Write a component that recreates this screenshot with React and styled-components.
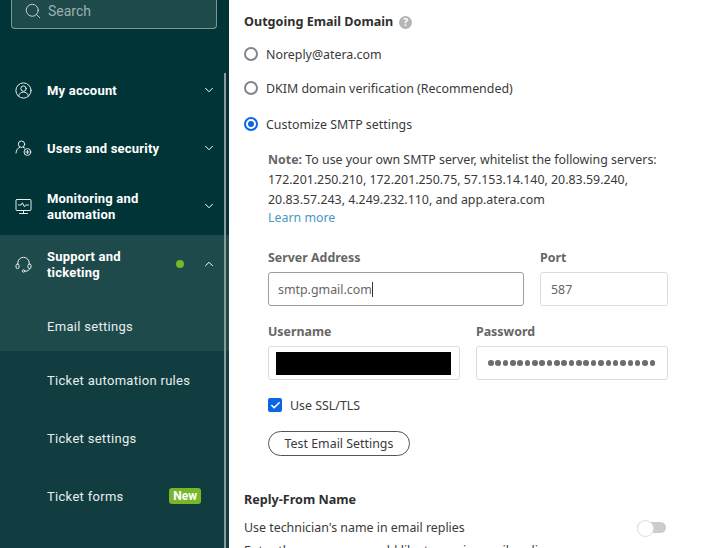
import React from 'react'
import styled, { createGlobalStyle } from 'styled-components'
import { Search, ChevronDown, ChevronUp, Check } from 'lucide-react'

const Global = createGlobalStyle`
  html, body {
    margin: 0;
    height: 100%;
    overflow: hidden;
    background: #fff;
  }
  * { box-sizing: border-box; }
`

const Page = styled.div`
  display: flex;
  width: 706px;
  height: 548px;
  overflow: hidden;
`

const Sidebar = styled.aside`
  position: relative;
  flex: 0 0 229px;
  height: 548px;
  background: #003437;
  font-family: Roboto, sans-serif;
  color: #fff;
  overflow: hidden;
`

const Scrollbar = styled.div`
  position: absolute;
  top: 73px;
  bottom: 0;
  right: 3px;
  width: 2px;
  background: #8a9a9b;
`

const SearchBox = styled.div`
  display: flex;
  align-items: center;
  gap: 6px;
  width: 206px;
  height: 29px;
  margin: 0 0 32px 11px;
  padding: 0 0 6px 12px;
  background: #1f4a4b;
  border: 1px solid #7f9696;
  border-top: 0;
  border-radius: 0 0 4px 4px;
  color: #9bb0b0;
  font-size: 14px;
`

const NavItem = styled.div`
  display: flex;
  align-items: center;
  height: 58px;
  padding-left: 15px;
  background: ${p => (p.$open ? '#1f4a4b' : 'transparent')};
  font-size: 13px;
  font-weight: 700;
  line-height: 16px;
  letter-spacing: 0.2px;
`

const NavIcon = styled.svg`
  flex: 0 0 17px;
  width: 17px;
  height: 17px;
  margin-right: 15px;
  fill: none;
  stroke: #e6eded;
  stroke-width: 1;
  stroke-linecap: round;
  stroke-linejoin: round;
`

const NavLabel = styled.span`
  flex: 1;
  padding-top: 2px;
`

const Dot = styled.span`
  width: 8px;
  height: 8px;
  margin-right: 18px;
  border-radius: 50%;
  background: #76b82a;
`

const Chevron = styled.span`
  display: flex;
  margin-right: 13px;
`

const SubMenu = styled.div`
  height: 255px;
  background: #113d40;
`

const SubItem = styled.div`
  display: flex;
  align-items: center;
  justify-content: space-between;
  height: 58px;
  padding: ${p => (p.$active ? '8px' : '0')} 28px 0 47px;
  background: ${p => (p.$active ? '#1f4a4b' : 'transparent')};
  font-size: 13px;
  letter-spacing: 0.3px;
  color: #e8eeee;
`

const NewBadge = styled.span`
  padding: 1px 4px;
  border-radius: 3px;
  background: #76b82a;
  color: #fff;
  font-size: 12px;
  font-weight: 700;
  line-height: 14px;
  letter-spacing: 0;
`

const Main = styled.main`
  flex: 1;
  padding: 13px 0 0 15px;
  font-family: "Noto Sans", sans-serif;
  font-size: 12.4px;
  color: #3a3a3a;
`

const Heading = styled.h3`
  display: flex;
  align-items: center;
  gap: 6px;
  margin: 0;
  font-size: 12.6px;
  line-height: 18px;
  font-weight: 700;
  color: #2f2f2f;
`

const HelpIcon = styled.span`
  display: flex;
  align-items: center;
  justify-content: center;
  width: 13px;
  height: 13px;
  border-radius: 50%;
  background: #b5b5b5;
  color: #fff;
  font-size: 10px;
  font-weight: 700;
`

const RadioRow = styled.label`
  display: flex;
  align-items: center;
  gap: 8px;
  height: 18px;
  margin-top: ${p => p.$top}px;
`

const Radio = styled.span`
  display: flex;
  align-items: center;
  justify-content: center;
  width: 14px;
  height: 14px;
  border-radius: 50%;
  border: 2px solid ${p => (p.$checked ? '#0a66e4' : '#85838f')};
  &::after {
    content: '';
    display: ${p => (p.$checked ? 'block' : 'none')};
    width: 6px;
    height: 6px;
    border-radius: 50%;
    background: #0a66e4;
  }
`

const Details = styled.div`
  width: 400px;
  margin: 17px 0 0 24px;
`

const Note = styled.p`
  margin: 0;
  font-size: 12.38px;
  line-height: 20px;
  white-space: nowrap;
  color: #3a3a3a;
  b { color: #666; }
`

const LearnMore = styled.a`
  display: block;
  margin-top: -1px;
  line-height: 18px;
  color: #4a97c2;
`

const FieldRow = styled.div`
  display: flex;
  gap: 16px;
  margin-top: ${p => p.$top}px;
`

const Field = styled.div`
  width: ${p => p.$width}px;
`

const FieldLabel = styled.div`
  height: 18px;
  margin-bottom: 5px;
  font-size: 12.4px;
  line-height: 18px;
  font-weight: 700;
  color: #666;
`

const InputBox = styled.div`
  display: flex;
  align-items: center;
  height: 34px;
  padding: 0 ${p => p.$pad ?? 10}px;
  border: 1px solid ${p => (p.$focused ? '#9c9c9c' : '#dcdcdc')};
  border-radius: 3px;
  overflow: hidden;
  color: #666;
  white-space: nowrap;
`

const Caret = styled.span`
  width: 1px;
  height: 15px;
  background: #333;
`

const Redaction = styled.div`
  width: 175px;
  height: 23px;
  background: #000;
`

const Dots = styled.span`
  display: flex;
  gap: 1.75px;
  width: 168px;
  overflow: hidden;
`

const PasswordDot = styled.i`
  flex: 0 0 5.6px;
  height: 5.6px;
  border-radius: 50%;
  background: #6e6e6e;
`

const CheckRow = styled.label`
  display: flex;
  align-items: center;
  gap: 8px;
  margin-top: 16px;
  height: 18px;
`

const CheckBox = styled.span`
  display: flex;
  align-items: center;
  justify-content: center;
  width: 14px;
  height: 14px;
  border-radius: 2px;
  background: #0a66e4;
`

const TestButton = styled.button`
  display: block;
  width: 142px;
  height: 25px;
  margin-top: 17px;
  padding: 0;
  background: #fff;
  border: 1px solid #555;
  border-radius: 13px;
  font: inherit;
  color: #3a3a3a;
`

const ReplySection = styled.section`
  margin-top: 35px;
`

const ToggleRow = styled.div`
  display: flex;
  align-items: center;
  justify-content: space-between;
  width: 422px;
  margin-top: 9px;
  height: 18px;
`

const Toggle = styled.span`
  position: relative;
  width: 29px;
  height: 11px;
  border-radius: 6px;
  background: #cccccc;
  &::before {
    content: '';
    position: absolute;
    left: 0;
    top: -2px;
    width: 15px;
    height: 15px;
    border-radius: 50%;
    background: #fff;
    border: 1px solid #ddd;
  }
`

const CutLine = styled.div`
  margin-top: 6px;
  white-space: nowrap;
`

const AccountIcon = () => (
  <NavIcon viewBox="0 0 17 17">
    <circle cx="8.5" cy="8.5" r="7.6" />
    <circle cx="8.5" cy="6.6" r="2.7" />
    <path d="M3.6 14c.6-2.6 2.5-3.9 4.9-3.9s4.3 1.3 4.9 3.9" />
  </NavIcon>
)

const UsersIcon = () => (
  <NavIcon viewBox="0 0 17 17">
    <circle cx="6.5" cy="4.2" r="3.2" />
    <path d="M1 13c.3-3 1.8-5.2 3.8-5.7M8.4 7.4c.5.2.9.4 1.3.7" />
    <circle cx="12.4" cy="12" r="3.4" />
    <path d="M12.4 10.4v3.2M10.8 12h3.2" />
  </NavIcon>
)

const MonitorIcon = () => (
  <NavIcon viewBox="0 0 17 17">
    <rect x="1" y="1.5" width="15" height="11" rx="1" />
    <path d="M3.5 7h2.6l1.3-2.2 2 4 1.3-1.8h2.8M8.5 12.5v3M4.5 15.5h8" />
  </NavIcon>
)

const HeadsetIcon = () => (
  <NavIcon viewBox="0 0 17 17">
    <path d="M2.8 8V7a5.7 5.7 0 0 1 11.4 0v1" />
    <rect x="1" y="8" width="3" height="4.6" rx="1.5" />
    <rect x="13" y="8" width="3" height="4.6" rx="1.5" />
    <path d="M14.5 12.6c0 1.8-1.6 2.6-4 2.6" />
    <circle cx="8.6" cy="15" r="1.2" />
  </NavIcon>
)

const password = Array.from({ length: 24 })

export default function App() {
  return (
    <Page>
      <Global />
      <Sidebar>
        <SearchBox>
          <Search size={18} strokeWidth={1.1} color="#e0e8e8" />
          Search
        </SearchBox>
        <NavItem>
          <AccountIcon />
          <NavLabel>My account</NavLabel>
          <Chevron><ChevronDown size={14} strokeWidth={1.7} /></Chevron>
        </NavItem>
        <NavItem>
          <UsersIcon />
          <NavLabel>Users and security</NavLabel>
          <Chevron><ChevronDown size={14} strokeWidth={1.7} /></Chevron>
        </NavItem>
        <NavItem>
          <MonitorIcon />
          <NavLabel>Monitoring and<br />automation</NavLabel>
          <Chevron><ChevronDown size={14} strokeWidth={1.7} /></Chevron>
        </NavItem>
        <NavItem $open>
          <HeadsetIcon />
          <NavLabel>Support and<br />ticketing</NavLabel>
          <Dot />
          <Chevron><ChevronUp size={14} strokeWidth={1.7} /></Chevron>
        </NavItem>
        <SubMenu>
          <SubItem $active>Email settings</SubItem>
          <SubItem>Ticket automation rules</SubItem>
          <SubItem>Ticket settings</SubItem>
          <SubItem>Ticket forms<NewBadge>New</NewBadge></SubItem>
        </SubMenu>
        <Scrollbar />
      </Sidebar>
      <Main>
        <Heading>Outgoing Email Domain <HelpIcon>?</HelpIcon></Heading>
        <RadioRow $top={14}><Radio />Noreply@atera.com</RadioRow>
        <RadioRow $top={16}><Radio />DKIM domain verification (Recommended)</RadioRow>
        <RadioRow $top={18}><Radio $checked />Customize SMTP settings</RadioRow>
        <Details>
          <Note>
            <b>Note:</b> To use your own SMTP server, whitelist the following servers:<br />
            172.201.250.210, 172.201.250.75, 57.153.14.140, 20.83.59.240,<br />
            20.83.57.243, 4.249.232.110, and app.atera.com
            <LearnMore>Learn more</LearnMore>
          </Note>
          <FieldRow $top={22}>
            <Field $width={256}>
              <FieldLabel>Server Address</FieldLabel>
              <InputBox $focused $pad={9}>smtp.gmail.com<Caret /></InputBox>
            </Field>
            <Field $width={128}>
              <FieldLabel>Port</FieldLabel>
              <InputBox>587</InputBox>
            </Field>
          </FieldRow>
          <FieldRow $top={17}>
            <Field $width={192}>
              <FieldLabel>Username</FieldLabel>
              <InputBox $pad={7}><Redaction /></InputBox>
            </Field>
            <Field $width={192}>
              <FieldLabel>Password</FieldLabel>
              <InputBox $pad={11}>
                <Dots>{password.map((_, i) => <PasswordDot key={i} />)}</Dots>
              </InputBox>
            </Field>
          </FieldRow>
          <CheckRow>
            <CheckBox><Check size={11} strokeWidth={3.5} color="#fff" /></CheckBox>
            Use SSL/TLS
          </CheckRow>
          <TestButton>Test Email Settings</TestButton>
        </Details>
        <ReplySection>
          <Heading>Reply-From Name</Heading>
          <ToggleRow>
            Use technician's name in email replies
            <Toggle />
          </ToggleRow>
          <CutLine>Enter the name you would like to use in email replies</CutLine>
        </ReplySection>
      </Main>
    </Page>
  )
}
